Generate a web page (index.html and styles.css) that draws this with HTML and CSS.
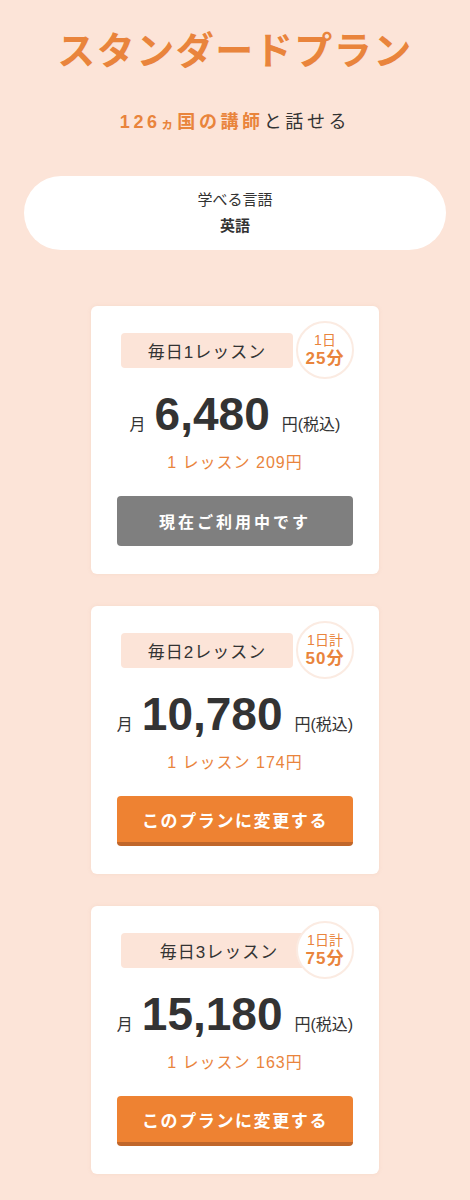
FILE: index.html
```html
<!DOCTYPE html>
<html lang="ja">
<head>
    <meta charset="UTF-8">
    <meta name="viewport" content="width=device-width, initial-scale=1.0">
    <title>スタンダードプラン</title>
    <link rel="stylesheet" href="styles.css">
</head>
<body>
    <div class="page">
        <h1 class="plan-title">スタンダードプラン</h1>
        <p class="plan-lead"><span class="accent">126<small>ヵ</small>国の講師</span>と話せる</p>

        <div class="lang-box">
            <p class="lang-label">学べる言語</p>
            <p class="lang-name">英語</p>
        </div>

        <div class="plan-list">
            <div class="plan-card">
                <div class="plan-head">
                    <span class="plan-name">毎日1レッスン</span>
                    <span class="plan-badge">1日<b>25分</b></span>
                </div>
                <div class="plan-price">
                    <span class="unit">月</span>
                    <span class="amount">6,480</span>
                    <span class="tax">円(税込)</span>
                </div>
                <p class="per-lesson">1 レッスン 209円</p>
                <button class="btn btn-current">現在ご利用中です</button>
            </div>

            <div class="plan-card">
                <div class="plan-head">
                    <span class="plan-name">毎日2レッスン</span>
                    <span class="plan-badge">1日計<b>50分</b></span>
                </div>
                <div class="plan-price">
                    <span class="unit">月</span>
                    <span class="amount">10,780</span>
                    <span class="tax">円(税込)</span>
                </div>
                <p class="per-lesson">1 レッスン 174円</p>
                <button class="btn btn-change">このプランに変更する</button>
            </div>

            <div class="plan-card">
                <div class="plan-head">
                    <span class="plan-name plan-name-wide">毎日3レッスン</span>
                    <span class="plan-badge">1日計<b>75分</b></span>
                </div>
                <div class="plan-price">
                    <span class="unit">月</span>
                    <span class="amount">15,180</span>
                    <span class="tax">円(税込)</span>
                </div>
                <p class="per-lesson">1 レッスン 163円</p>
                <button class="btn btn-change">このプランに変更する</button>
            </div>
        </div>
    </div>
</body>
</html>
```

FILE: styles.css
```css
:root {
    --bg-color: #fce4d8;
    --orange: #e9843c;
    --btn-orange: #ee8232;
    --btn-shadow: #c0662a;
    --text-color: #333333;
    --white-color: #ffffff;
}

body {
    margin: 0;
    padding: 0;
    background-color: var(--bg-color);
    color: var(--text-color);
    font-family: "Liberation Sans", "Noto Sans CJK JP", sans-serif;
}

.page {
    padding: 26px 0 40px;
}

.plan-title {
    margin: 0;
    text-align: center;
    font-size: 38px;
    line-height: 50px;
    letter-spacing: 1.5px;
    color: var(--orange);
    font-weight: 700;
}

.plan-lead {
    margin: 32px 0 0;
    text-align: center;
    font-size: 18px;
    line-height: 28px;
    letter-spacing: 3.6px;
}

.plan-lead .accent {
    color: var(--orange);
    font-weight: 700;
}

.plan-lead small {
    font-size: 13px;
}

.lang-box {
    margin: 38px 24px 0 24px;
    background-color: var(--white-color);
    border-radius: 40px;
    padding: 11px 0;
    text-align: center;
}

.lang-box p {
    margin: 0;
    font-size: 15px;
    line-height: 26px;
}

.lang-name {
    font-weight: 700;
}

.plan-list {
    margin-top: 56px;
    display: flex;
    flex-direction: column;
    align-items: center;
    gap: 32px;
}

.plan-card {
    width: 288px;
    box-sizing: border-box;
    background-color: var(--white-color);
    border-radius: 6px;
    padding: 27px 16px 28px;
    display: flex;
    flex-direction: column;
    align-items: center;
    box-shadow: 0 0 4px rgba(200, 140, 110, 0.12);
}

.plan-head {
    position: relative;
    width: 236px;
    height: 35px;
}

.plan-name {
    display: flex;
    align-items: center;
    justify-content: center;
    width: 172px;
    height: 35px;
    margin-left: 4px;
    background-color: var(--bg-color);
    border-radius: 4px;
    font-size: 17px;
    letter-spacing: 1px;
}

.plan-name-wide {
    width: 196px;
}

.plan-badge {
    position: absolute;
    right: -1px;
    top: -12px;
    width: 54px;
    height: 54px;
    border: 2px solid #fbebe2;
    border-radius: 50%;
    background-color: var(--white-color);
    color: var(--orange);
    font-size: 14px;
    line-height: 17px;
    display: flex;
    flex-direction: column;
    align-items: center;
    justify-content: center;
}

.plan-badge b {
    font-size: 17px;
    line-height: 20px;
    letter-spacing: 1px;
}

.plan-price {
    margin-top: 20px;
    height: 52px;
    display: flex;
    align-items: baseline;
    justify-content: center;
    white-space: nowrap;
}

.plan-price .unit {
    font-size: 16px;
    margin-right: 9px;
}

.plan-price .amount {
    font-size: 46px;
    line-height: 52px;
    font-weight: 700;
    margin-right: 12px;
}

.plan-price .tax {
    font-size: 16px;
}

.per-lesson {
    margin: 11px 0 0;
    font-size: 16px;
    line-height: 24px;
    letter-spacing: 1px;
    color: var(--orange);
}

.btn {
    margin-top: 21px;
    width: 236px;
    height: 50px;
    border: none;
    border-radius: 4px;
    color: var(--white-color);
    font-family: inherit;
    font-size: 16px;
    font-weight: 700;
    letter-spacing: 2px;
    cursor: pointer;
}

.btn-current {
    background-color: #7f7f7f;
    letter-spacing: 3px;
}

.btn-change {
    background-color: var(--btn-orange);
    border-bottom: 4px solid var(--btn-shadow);
    font-size: 17px;
    letter-spacing: 1.6px;
}
```
